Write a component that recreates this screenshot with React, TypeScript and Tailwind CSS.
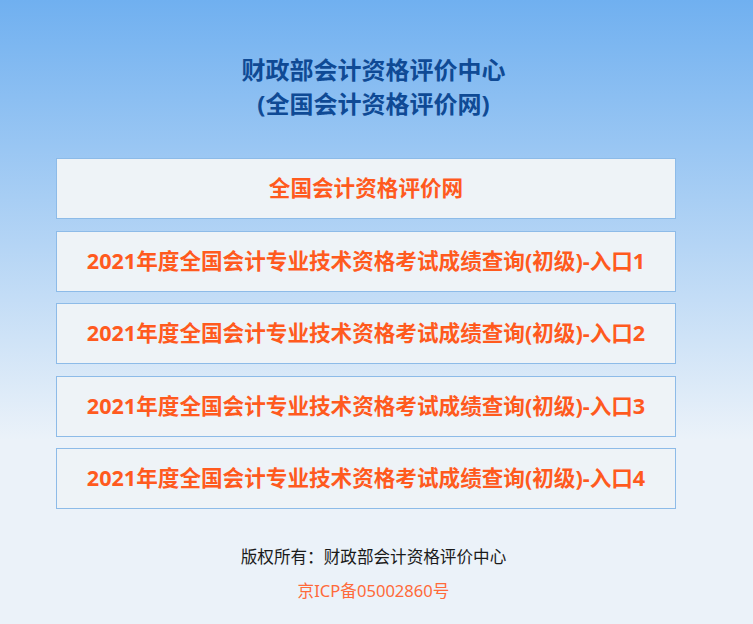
import React from "react";

const items = [
  "全国会计资格评价网",
  "2021年度全国会计专业技术资格考试成绩查询(初级)-入口1",
  "2021年度全国会计专业技术资格考试成绩查询(初级)-入口2",
  "2021年度全国会计专业技术资格考试成绩查询(初级)-入口3",
  "2021年度全国会计专业技术资格考试成绩查询(初级)-入口4",
];

export default function App() {
  return (
    <div
      className="min-h-screen w-full bg-[linear-gradient(180deg,#70b0f0_0px,#ebf2f9_440px,#ebf2f9_100%)] flex flex-col pt-[53px]"
      style={{ fontFamily: '"Noto Sans", "Noto Sans CJK SC", sans-serif' }}
    >
      <h1 className="text-center text-[24px] leading-[34px] font-bold text-[#0f4a95] pr-[6px]">
        财政部会计资格评价中心
        <br />
        (全国会计资格评价网)
      </h1>
      <div className="mt-[37px] ml-[56px] w-[620px] flex flex-col gap-[11.5px]">
        {items.map((t) => (
          <div
            key={t}
            className="h-[61px] border border-[#8dbbe8] bg-[#eef3f7] flex items-center justify-center text-[21.6px] font-bold text-[#ff5a1e]"
          >
            {t}
          </div>
        ))}
      </div>
      <div className="mt-[31px] text-center text-[16.6px] leading-[34px] pr-[6px]">
        <div className="text-[#1a1a1a]">版权所有：财政部会计资格评价中心</div>
        <div className="text-[#ff6a3a]">京ICP备05002860号</div>
      </div>
    </div>
  );
}
